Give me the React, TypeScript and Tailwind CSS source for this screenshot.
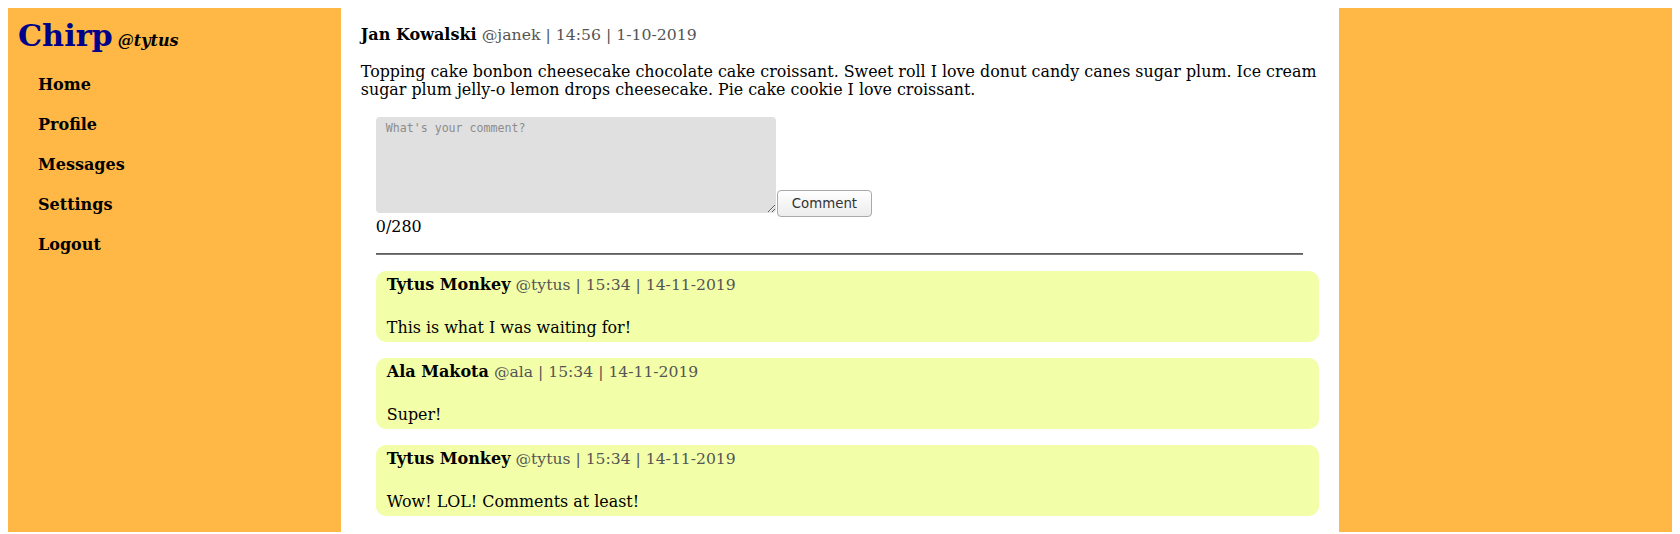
import { useState } from 'react';

const comments = [
  { name: 'Tytus Monkey', handle: '@tytus', time: '15:34', date: '14-11-2019', text: 'This is what I was waiting for!' },
  { name: 'Ala Makota', handle: '@ala', time: '15:34', date: '14-11-2019', text: 'Super!' },
  { name: 'Tytus Monkey', handle: '@tytus', time: '15:34', date: '14-11-2019', text: 'Wow! LOL! Comments at least!' },
];

const navItems = ['Home', 'Profile', 'Messages', 'Settings', 'Logout'];

const App = () => {
  const [comment, setComment] = useState('');

  return (
    <div className="min-h-screen bg-white p-2 font-['DejaVu_Serif',serif] text-black">
      <div className="grid grid-cols-[1fr_3fr_1fr] min-h-[calc(100vh-16px)]">

        {/* Sidebar */}
        <aside className="bg-[#ffb846] pl-[10px] pt-[9px]">
          <div className="flex items-baseline gap-[5px]">
            <h1 className="text-[30.3px] font-bold text-[#00008b] leading-[37px]">Chirp</h1>
            <span className="text-[16px] font-bold italic">@tytus</span>
          </div>
          <ul className="mt-[11px] ml-[20px]">
            {navItems.map((item) => (
              <li key={item} className="py-[10px] text-[16px] font-bold leading-[20px]">
                <a href="#">{item}</a>
              </li>
            ))}
          </ul>
        </aside>

        {/* Main */}
        <main className="bg-white px-[20px] pt-[18px] pb-4">
          <div className="text-[16px] leading-[18.6px]">
            <span className="font-bold">Jan Kowalski</span>{' '}
            <span className="text-[15.7px] text-[#555]">@janek | 14:56 | 1-10-2019</span>
          </div>
          <p className="mt-[18px] text-[15.86px] leading-[18.6px]">
            Topping cake bonbon cheesecake chocolate cake croissant. Sweet roll I love donut candy canes sugar plum. Ice cream sugar plum jelly-o lemon drops cheesecake. Pie cake cookie I love croissant.
          </p>

          <div className="ml-[15px] mt-[17px]">
            <div className="flex items-end gap-[1px]">
              <textarea
                value={comment}
                onChange={(e) => setComment(e.target.value)}
                placeholder="What's your comment?"
                className="w-[400px] h-[96px] resize rounded-[4px] bg-[#e0e0e0] px-[10px] py-[3px] font-['DejaVu_Sans_Mono',monospace] text-[11.6px] leading-[16px] outline-none placeholder:text-[#8c8c8c]"
              />
              <button className="mb-[-4px] rounded-[4px] border border-[#a9a9a9] bg-gradient-to-b from-white to-[#ececec] px-[14px] py-[4px] font-['DejaVu_Sans',sans-serif] text-[13.33px] leading-[17px] text-[#333]">
                Comment
              </button>
            </div>
            <div className="mt-[5px] text-[15.9px] leading-[18.6px]">{comment.length}/280</div>

            <div className="mt-[17px] mr-[16px] border-t border-b border-t-[#5e5e5e] border-b-[#7a7a7a]" />

            <div className="mt-[16px] flex flex-col gap-[16px]">
              {comments.map((c, i) => (
                <div key={i} className="h-[71px] rounded-[10px] bg-[#f3fea8] px-[11px] pt-[5px] text-[15.9px] leading-[18.6px]">
                  <div>
                    <span className="text-[16px] font-bold">{c.name}</span>{' '}
                    <span className="text-[15.6px] text-[#555]">{c.handle} | {c.time} | {c.date}</span>
                  </div>
                  <p className="mt-[24px]">{c.text}</p>
                </div>
              ))}
            </div>
          </div>
        </main>

        {/* Right column */}
        <aside className="bg-[#ffb846]" />
      </div>
    </div>
  );
};

export default App;
